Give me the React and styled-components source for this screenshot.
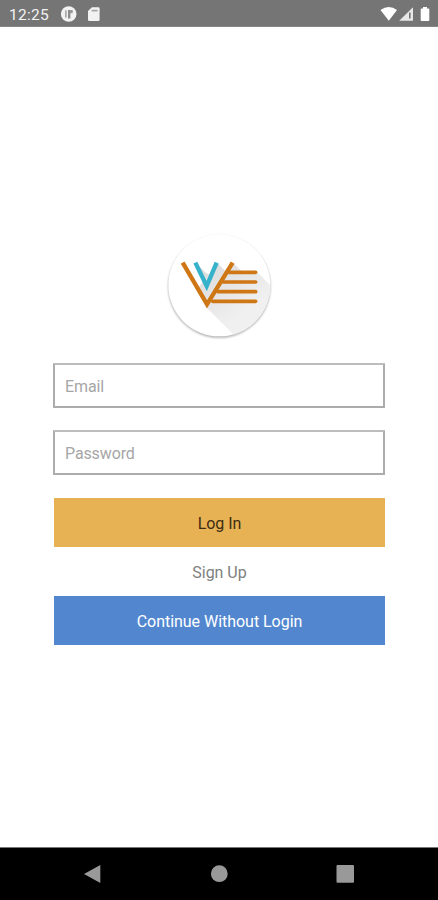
import React from "react";
import styled, { createGlobalStyle } from "styled-components";

const GlobalStyle = createGlobalStyle`
  * { box-sizing: border-box; }
  body { margin: 0; background: #fff; font-family: Roboto, sans-serif; }
`;

const Screen = styled.div`
  width: 438px;
  height: 900px;
  display: flex;
  flex-direction: column;
  background: #fff;
  overflow: hidden;
`;

const StatusBar = styled.header`
  height: 27px;
  flex: none;
  display: flex;
  align-items: center;
  justify-content: space-between;
  background: #757575;
  border-bottom: 1px solid #868686;
  color: #f2f2f2;
`;

const StatusGroup = styled.div`
  display: flex;
  align-items: center;
  height: 26px;
`;

const Clock = styled.span`
  width: 50px;
  margin-left: 9px;
  padding-top: 3px;
  font-size: 15.5px;
  line-height: 20px;
  letter-spacing: 0.25px;
`;

const Content = styled.main`
  flex: 1;
  display: flex;
  flex-direction: column;
  align-items: center;
  padding-top: 198px;
`;

const Logo = styled.svg`
  flex: none;
  width: 130px;
  height: 125px;
`;

const Form = styled.form`
  width: 332px;
  margin-top: 13px;
  display: flex;
  flex-direction: column;
`;

const Field = styled.input`
  width: 100%;
  height: 45px;
  margin-bottom: 22px;
  padding: 2px 0 0 10px;
  border: 2px solid #acacac;
  border-top-color: #bdbdbd;
  border-radius: 1px;
  outline: none;
  background: #fff;
  font-family: inherit;
  font-size: 16px;
  letter-spacing: -0.12px;
  &::placeholder { color: #a6a6a6; opacity: 1; }
`;

const Actions = styled.div`
  display: flex;
  flex-direction: column;
  margin: 1px 0 0 1px;
`;

const Button = styled.button`
  height: 49px;
  padding: 1px 0 0;
  border: 0;
  background: ${(p) => p.$fill};
  color: ${(p) => p.$ink};
  font-family: inherit;
  font-size: 16px;
  letter-spacing: -0.03px;
`;

const SignUp = styled(Button)`
  background: none;
`;

const NavBar = styled.nav`
  height: 53px;
  flex: none;
  border-top: 1px solid #777;
  background: #000;
`;

const NavIcons = styled.svg`
  display: block;
  width: 438px;
  height: 52px;
`;

function LogoMark() {
  return (
    <Logo viewBox="0 0 390 375">
      <defs>
        <filter id="soft" x="-10%" y="-10%" width="120%" height="120%">
          <feGaussianBlur stdDeviation="3.5" />
        </filter>
        <clipPath id="disc">
          <circle cx="196" cy="181" r="153" />
        </clipPath>
        <linearGradient id="shade" gradientUnits="userSpaceOnUse" x1="150" y1="130" x2="260" y2="270">
          <stop offset="0" stopColor="#dcdcdc" />
          <stop offset="1" stopColor="#f0f0f0" />
        </linearGradient>
      </defs>
      <circle cx="196" cy="185" r="153.5" fill="#000" opacity="0.3" filter="url(#soft)" />
      <circle cx="196" cy="181" r="153" fill="#fff" />
      <g clipPath="url(#disc)" fill="url(#shade)">
        <path d="M128 116L157 145L175 150L192 116L214 138L160 236L132 190L146 170Z" />
        <path d="M240 116L265 140L310 142L430 262V385H295L159 249L224 140Z" />
      </g>
      <g fill="none" stroke="#cf7714" strokeWidth="11">
        <path d="M224 142H305M208 171H305M192 200H305M176 229H305" strokeLinecap="round" />
        <path d="M86 113L159 238L236 113" strokeWidth="13" />
      </g>
      <path d="M124 113L158 183L188 113" fill="none" stroke="#36b3ca" strokeWidth="13" />
    </Logo>
  );
}

function NoticeIcons() {
  return (
    <svg width="44" height="26" viewBox="59 0 44 26">
      <circle cx="68.7" cy="14" r="7.8" fill="#f2f2f2" />
      <path d="M65.9 10.2V17.5" stroke="#8c8c8c" strokeWidth="1.2" />
      <path d="M68 18.5V10H70.4V18.5Z" fill="#8c8c8c" />
      <path d="M70 10H72.7V13.2H70Z" fill="#999" />
      <path d="M92 7.2H98.4Q99.6 7.2 99.6 8.4V19.8Q99.6 21 98.4 21H89.2Q88 21 88 19.8V11Z" fill="#f2f2f2" />
      <path d="M91.6 10.6H97.6" stroke="#a5a5a5" strokeWidth="1.7" />
    </svg>
  );
}

function SystemIcons() {
  return (
    <svg width="58" height="26" viewBox="380 0 58 26">
      <path d="M380.5 10Q388.8 4.2 397 10L388.8 20.8Z" fill="#fff" />
      <path d="M413 7.3V20.7H399.2Z" fill="#e8e8e8" />
      <path d="M409.8 12.5V18.5" stroke="#757575" strokeWidth="1.6" />
      <path d="M423 7H427V8.5H428.5Q429.3 8.5 429.3 9.3V20.2Q429.3 21 428.5 21H421.5Q420.7 21 420.7 20.2V9.3Q420.7 8.5 421.5 8.5H423Z" fill="#fff" />
    </svg>
  );
}

export default function App() {
  return (
    <>
      <GlobalStyle />
      <Screen>
        <StatusBar>
          <StatusGroup>
            <Clock>12:25</Clock>
            <NoticeIcons />
          </StatusGroup>
          <StatusGroup>
            <SystemIcons />
          </StatusGroup>
        </StatusBar>
        <Content>
          <LogoMark />
          <Form>
            <Field type="email" placeholder="Email" />
            <Field type="password" placeholder="Password" />
            <Actions>
              <Button type="button" $fill="#e6b254" $ink="#3c2c12">Log In</Button>
              <SignUp type="button" $ink="#808080">Sign Up</SignUp>
              <Button type="button" $fill="#5287d0" $ink="#fff">Continue Without Login</Button>
            </Actions>
          </Form>
        </Content>
        <NavBar>
          <NavIcons viewBox="0 848 438 52">
            <g fill="#999">
              <path d="M100.3 865V883L84 874Z" />
              <circle cx="219.3" cy="873.7" r="8.4" />
              <rect x="336.5" y="865" width="17.5" height="17.8" rx="1" />
            </g>
          </NavIcons>
        </NavBar>
      </Screen>
    </>
  );
}
